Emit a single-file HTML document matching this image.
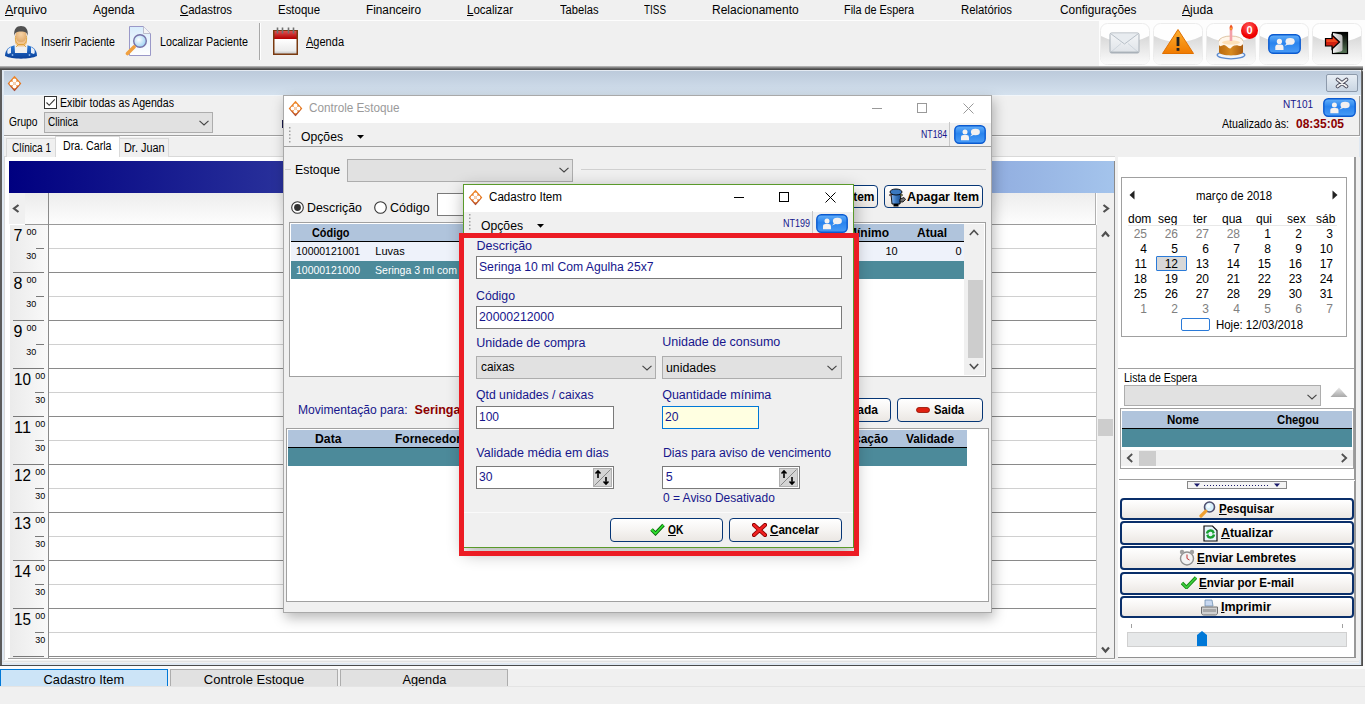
<!DOCTYPE html>
<html><head><meta charset="utf-8"><title>Cadastro Item</title>
<style>
html,body{margin:0;padding:0;}
body{width:1365px;height:704px;overflow:hidden;position:relative;background:#f0f0f0;font-family:"Liberation Sans",sans-serif;}
.r{position:absolute;display:block;}
.t{position:absolute;white-space:nowrap;}
u{text-decoration:underline;text-underline-offset:1px;}
</style></head><body>
<div class="r" style="left:0px;top:0px;width:1365px;height:20px;background:#f0f0f0"></div>
<div class="r" style="left:0px;top:20px;width:1365px;height:1px;background:#fdfdfd"></div>
<div class="t" style="left:5.00px;top:4.34px;font-size:12px;line-height:12px;color:#000;transform:scaleX(1.0323);transform-origin:left 0;"><u>A</u>rquivo</div>
<div class="t" style="left:93.00px;top:4.34px;font-size:12px;line-height:12px;color:#000;">Agenda</div>
<div class="t" style="left:180.00px;top:4.34px;font-size:12px;line-height:12px;color:#000;transform:scaleX(0.9508);transform-origin:left 0;"><u>C</u>adastros</div>
<div class="t" style="left:278.00px;top:4.34px;font-size:12px;line-height:12px;color:#000;transform:scaleX(0.9539);transform-origin:left 0;">Estoque</div>
<div class="t" style="left:366.00px;top:4.34px;font-size:12px;line-height:12px;color:#000;transform:scaleX(0.9817);transform-origin:left 0;">Financeiro</div>
<div class="t" style="left:467.00px;top:4.34px;font-size:12px;line-height:12px;color:#000;transform:scaleX(0.9579);transform-origin:left 0;"><u>L</u>ocalizar</div>
<div class="t" style="left:560.00px;top:4.34px;font-size:12px;line-height:12px;color:#000;transform:scaleX(0.9309);transform-origin:left 0;">Tabelas</div>
<div class="t" style="left:644.00px;top:4.34px;font-size:12px;line-height:12px;color:#000;transform:scaleX(0.8248);transform-origin:left 0;">TISS</div>
<div class="t" style="left:712.00px;top:4.34px;font-size:12px;line-height:12px;color:#000;">Relacionamento</div>
<div class="t" style="left:844.00px;top:4.34px;font-size:12px;line-height:12px;color:#000;transform:scaleX(0.9048);transform-origin:left 0;">Fila de Espera</div>
<div class="t" style="left:961.00px;top:4.34px;font-size:12px;line-height:12px;color:#000;transform:scaleX(0.9441);transform-origin:left 0;">Relatórios</div>
<div class="t" style="left:1059.50px;top:4.34px;font-size:12px;line-height:12px;color:#000;transform:scaleX(0.9887);transform-origin:left 0;">Configurações</div>
<div class="t" style="left:1182.00px;top:4.34px;font-size:12px;line-height:12px;color:#000;transform:scaleX(1.0101);transform-origin:left 0;"><u>A</u>juda</div>
<div class="r" style="left:0px;top:21px;width:1365px;height:45px;background:#f0f0f0"></div>
<svg class="r" style="left:0px;top:23px" width="40" height="37" viewBox="0 0 40 37"><defs><linearGradient id="pg1" x1="0" y1="0" x2="0" y2="1"><stop offset="0" stop-color="#2a7ad8"/><stop offset="1" stop-color="#0a3f98"/></linearGradient>
<radialGradient id="pg2" cx="0.5" cy="0.4" r="0.6"><stop offset="0" stop-color="#f6d3a6"/><stop offset="1" stop-color="#e0a96a"/></radialGradient></defs>
<path d="M5 33 C5 26 10 23 16 22 L26 22 C32 23 37 26 37 33 C30 36.5 12 36.5 5 33Z" fill="url(#pg1)"/>
<path d="M14.5 22 L27.5 22 L27 30 L15 30Z" fill="#efefef"/>
<path d="M8 26 C7 28 7 30 8 31 L11 30 L11 24Z" fill="#e8eef8"/>
<path d="M34 26 C35 28 35 30 34 31 L31 30 L31 24Z" fill="#e8eef8"/>
<circle cx="12.5" cy="32" r="0.9" fill="#8ab4e8"/><circle cx="29.5" cy="32" r="0.9" fill="#8ab4e8"/>
<path d="M15.5 15 L15 20 L17.5 23.5 L24.5 23.5 L27 20 L26.5 15Z" fill="#f2c48e"/>
<path d="M15.5 13 C15 18 16 20 18.5 21.5 L16 24 M26.5 13 C27 18 26 20 23.5 21.5 L26 24 M18.5 21.5 H23.5" fill="none" stroke="#d89a20" stroke-width="0.8"/>
<ellipse cx="21" cy="12.5" rx="5.6" ry="6.6" fill="url(#pg2)"/>
<path d="M14.3 13 C13.5 6 16.5 3 21 3 C25.5 3 28.5 6 27.7 13 C27 9.5 25.5 8.5 21 8.5 C16.5 8.5 15 9.5 14.3 13Z" fill="#505050"/></svg>
<div class="t" style="left:41.00px;top:36.34px;font-size:12px;line-height:12px;color:#000;transform:scaleX(0.8876);transform-origin:left 0;">Inserir Paciente</div>
<svg class="r" style="left:125px;top:25px" width="27" height="32" viewBox="0 0 27 32"><defs><linearGradient id="mg1" x1="0" y1="0" x2="0" y2="1"><stop offset="0" stop-color="#d8ecfc"/><stop offset="1" stop-color="#ffffff"/></linearGradient>
<radialGradient id="mg2" cx="0.4" cy="0.4" r="0.6"><stop offset="0" stop-color="#ffffff"/><stop offset="1" stop-color="#9fd4f4"/></radialGradient></defs>
<path d="M4.5 1.5 L18.5 1.5 L25.5 8.5 L25.5 30.5 L4.5 30.5Z" fill="url(#mg1)" stroke="#9a98c8" stroke-width="1"/>
<path d="M18.5 1.5 L18.5 8.5 L25.5 8.5" fill="#f4f4f4" stroke="#b0b0c0" stroke-width="0.8"/>
<circle cx="15" cy="16" r="6.3" fill="url(#mg2)" stroke="#7872a8" stroke-width="1.4"/>
<path d="M2.5 28.5 L9 22" stroke="#f0a040" stroke-width="3.6" stroke-linecap="round"/></svg>
<div class="t" style="left:160.00px;top:36.34px;font-size:12px;line-height:12px;color:#000;transform:scaleX(0.8975);transform-origin:left 0;">Localizar Paciente</div>
<div class="r" style="left:259px;top:23px;width:1px;height:37px;background:#a8a8a8"></div>
<div class="r" style="left:260px;top:23px;width:1px;height:37px;background:#ffffff"></div>
<svg class="r" style="left:272px;top:27px" width="27" height="29" viewBox="0 0 27 29"><defs><linearGradient id="cg1" x1="0" y1="0" x2="0" y2="1"><stop offset="0" stop-color="#e05050"/><stop offset="1" stop-color="#b00000"/></linearGradient>
<linearGradient id="cg2" x1="0" y1="0" x2="0" y2="1"><stop offset="0" stop-color="#ffffff"/><stop offset="0.8" stop-color="#ececec"/><stop offset="1" stop-color="#c8c8c8"/></linearGradient></defs>
<rect x="1" y="3" width="25" height="25" fill="#7a3a10"/>
<rect x="2.5" y="4" width="22" height="8" fill="url(#cg1)"/>
<rect x="2.5" y="12" width="22" height="14.5" fill="url(#cg2)"/>
<g stroke="#707070" stroke-width="1.6"><path d="M5.5 0.5V6.5M10.5 0.5V6.5M16.5 0.5V6.5M21.5 0.5V6.5"/></g></svg>
<div class="t" style="left:306.00px;top:36.34px;font-size:12px;line-height:12px;color:#000;transform:scaleX(0.9185);transform-origin:left 0;"><u>A</u>genda</div>
<div class="r" style="left:1099px;top:20px;width:266px;height:46px;background:#fdfdfd"></div>
<svg class="r" style="left:1100px;top:23px" width="50" height="42" viewBox="0 0 50 42"><defs><linearGradient id="tbg0" x1="0" y1="0" x2="0" y2="1"><stop offset="0" stop-color="#d8d8d8"/><stop offset="1" stop-color="#fbfbfb"/></linearGradient></defs><rect x="0.5" y="0.5" width="49" height="41" rx="7" fill="#fefefe" stroke="#ececec"/><path d="M1 13 Q25 25 49 13 V35 Q49 41 43 41 H7 Q1 41 1 35Z" fill="url(#tbg0)"/></svg>
<svg class="r" style="left:1153px;top:23px" width="50" height="42" viewBox="0 0 50 42"><defs><linearGradient id="tbg1" x1="0" y1="0" x2="0" y2="1"><stop offset="0" stop-color="#d8d8d8"/><stop offset="1" stop-color="#fbfbfb"/></linearGradient></defs><rect x="0.5" y="0.5" width="49" height="41" rx="7" fill="#fefefe" stroke="#ececec"/><path d="M1 13 Q25 25 49 13 V35 Q49 41 43 41 H7 Q1 41 1 35Z" fill="url(#tbg1)"/></svg>
<svg class="r" style="left:1206px;top:23px" width="50" height="42" viewBox="0 0 50 42"><defs><linearGradient id="tbg2" x1="0" y1="0" x2="0" y2="1"><stop offset="0" stop-color="#d8d8d8"/><stop offset="1" stop-color="#fbfbfb"/></linearGradient></defs><rect x="0.5" y="0.5" width="49" height="41" rx="7" fill="#fefefe" stroke="#ececec"/><path d="M1 13 Q25 25 49 13 V35 Q49 41 43 41 H7 Q1 41 1 35Z" fill="url(#tbg2)"/></svg>
<svg class="r" style="left:1259px;top:23px" width="50" height="42" viewBox="0 0 50 42"><defs><linearGradient id="tbg3" x1="0" y1="0" x2="0" y2="1"><stop offset="0" stop-color="#d8d8d8"/><stop offset="1" stop-color="#fbfbfb"/></linearGradient></defs><rect x="0.5" y="0.5" width="49" height="41" rx="7" fill="#fefefe" stroke="#ececec"/><path d="M1 13 Q25 25 49 13 V35 Q49 41 43 41 H7 Q1 41 1 35Z" fill="url(#tbg3)"/></svg>
<svg class="r" style="left:1312px;top:23px" width="50" height="42" viewBox="0 0 50 42"><defs><linearGradient id="tbg4" x1="0" y1="0" x2="0" y2="1"><stop offset="0" stop-color="#d8d8d8"/><stop offset="1" stop-color="#fbfbfb"/></linearGradient></defs><rect x="0.5" y="0.5" width="49" height="41" rx="7" fill="#fefefe" stroke="#ececec"/><path d="M1 13 Q25 25 49 13 V35 Q49 41 43 41 H7 Q1 41 1 35Z" fill="url(#tbg4)"/></svg>
<svg class="r" style="left:1108px;top:31px" width="33" height="24" viewBox="0 0 33 24"><defs><linearGradient id="env" x1="0" y1="0" x2="0" y2="1"><stop offset="0" stop-color="#f4f6f8"/><stop offset="1" stop-color="#dfe3e8"/></linearGradient></defs>
<rect x="2" y="2" width="29" height="20" rx="1.5" fill="url(#env)" stroke="#a8b0b8" stroke-width="1"/>
<path d="M2.5 2.5 L16.5 13 L30.5 2.5" fill="#e8ecf0" stroke="#b8c0c8" stroke-width="1"/>
<path d="M2.5 21.5 L13 12.5 M30.5 21.5 L20 12.5" stroke="#c8d0d8" stroke-width="0.8"/>
<rect x="2.5" y="20.5" width="28" height="1.5" fill="#98a0a8" opacity="0.6"/></svg>
<svg class="r" style="left:1161px;top:28px" width="34" height="27" viewBox="0 0 34 27"><defs><linearGradient id="wrn" x1="0" y1="0" x2="0" y2="1"><stop offset="0" stop-color="#ffb030"/><stop offset="1" stop-color="#f07a00"/></linearGradient></defs>
<path d="M17 1.5 L32.5 25.5 L1.5 25.5Z" fill="url(#wrn)" stroke="#e07000" stroke-linejoin="round"/><rect x="15.6" y="9" width="2.8" height="9" fill="#222"/><rect x="15.6" y="20" width="2.8" height="2.8" fill="#222"/></svg>
<svg class="r" style="left:1214px;top:24px" width="38" height="36" viewBox="0 0 38 36"><defs><linearGradient id="ck" x1="0" y1="0" x2="1" y2="0"><stop offset="0" stop-color="#b86a10"/><stop offset="0.5" stop-color="#d88a20"/><stop offset="1" stop-color="#a85a10"/></linearGradient></defs>
<ellipse cx="17" cy="31" rx="13.8" ry="3.8" fill="#eef4fc" stroke="#5a8ad0" stroke-width="1.3"/>
<path d="M5 17 L5 28 C5 32.5 29 32.5 29 28 L29 17Z" fill="url(#ck)"/>
<ellipse cx="17" cy="17" rx="12" ry="5" fill="#fff6ea" stroke="#c8a070" stroke-width="0.6"/>
<path d="M5 17 L5 21 C7 24 9 20 11 21 C13 22 15 26 17 24 C19 22 21 20 23 21 C25 22 27 23 29 20 L29 17Z" fill="#fff6ea"/>
<ellipse cx="17" cy="18.5" rx="9" ry="2.2" fill="#fde0b8"/>
<rect x="15.7" y="5" width="2.6" height="12" fill="#f4a0a8"/>
<path d="M17 0.5 C19.5 3 19 5.5 17 6.5 C15 5.5 15 3 17 0.5Z" fill="#f05020"/><path d="M17 3 C18 4.5 17.8 5.5 17 6 C16.2 5.5 16.2 4.5 17 3Z" fill="#ffd040"/></svg>
<div class="r" style="left:1241px;top:22px;width:17px;height:17px;border-radius:50%;background:radial-gradient(circle at 45% 30%,#ff6060,#f00000 60%,#e00000);color:#fff;font-size:11px;font-weight:bold;line-height:17px;text-align:center">0</div>
<svg class="r" style="left:1268px;top:34px" width="33" height="20" viewBox="0 0 33 20"><defs><linearGradient id="chg1268" x1="0" y1="0" x2="0" y2="1"><stop offset="0" stop-color="#64b0fa"/><stop offset="0.45" stop-color="#2a84ee"/><stop offset="1" stop-color="#4a9cf6"/></linearGradient></defs>
<rect x="0.8" y="0.8" width="31.4" height="18.4" rx="4.5" fill="url(#chg1268)" stroke="#0a5ad0" stroke-width="1.4"/>
<circle cx="11.4" cy="7.4" r="2.6" fill="#f6f2f0"/>
<path d="M7.3 16.0 V13.2 Q7.3 10.6 9.9 10.6 H12.9 Q15.5 10.6 15.5 13.2 V16.0Z" fill="#f6f2f0"/>
<ellipse cx="22.1" cy="7.4" rx="4.6" ry="3.4" fill="#f2f0f0"/>
<path d="M19.1 9.0 L16.5 12.0 L20.8 10.2Z" fill="#f2f0f0"/></svg>
<svg class="r" style="left:1322px;top:30px" width="28" height="26" viewBox="0 0 28 26"><defs><linearGradient id="exg" x1="0" y1="0" x2="0" y2="1"><stop offset="0" stop-color="#000"/><stop offset="1" stop-color="#5a7a5a"/></linearGradient><linearGradient id="exd" x1="0" y1="0" x2="1" y2="0"><stop offset="0" stop-color="#f0f0f0"/><stop offset="1" stop-color="#b8b8b8"/></linearGradient></defs>
<rect x="10.5" y="2.5" width="15" height="21" fill="url(#exg)" stroke="#000" stroke-width="1.2"/>
<path d="M11 3 L19 4.5 Q20.5 5 20.5 7 V19.5 Q20.5 21 19 21.5 L11 23Z" fill="url(#exd)"/>
<path d="M3.5 8.5 H10 V5 L17.5 12 L10 19 V16 H3.5Z" fill="#d02010" stroke="#000" stroke-width="1.2" stroke-linejoin="miter"/>
<path d="M4.5 9.5 H11 V7.5 L15.5 12 H4.5Z" fill="#f04a20"/></svg>
<div class="r" style="left:0px;top:66px;width:1365px;height:4px;background:linear-gradient(#c4c4c4,#6a6a6a 55%,#3c3c3c)"></div>
<div class="r" style="left:0px;top:70px;width:1365px;height:596px;background:#f0f0f0"></div>
<div class="r" style="left:0px;top:70px;width:2px;height:596px;background:#5c5c5c"></div>
<div class="r" style="left:1361px;top:70px;width:2px;height:596px;background:linear-gradient(90deg,#7a7a7a,#404040);border-radius:0 5px 0 0"></div>
<div class="r" style="left:1363px;top:66px;width:2px;height:603px;background:#fbfbfb"></div>
<div class="r" style="left:0px;top:665px;width:1363px;height:1px;background:#4a4a4a"></div>
<div class="r" style="left:2px;top:70px;width:1359px;height:25px;background:linear-gradient(#e4eaf2 0px,#e4eaf2 1px,#bccadb 1px,#d4e1ee);border-radius:4px 4px 0 0"></div>
<div class="r" style="left:2px;top:95px;width:1359px;height:1px;background:#f2f6fa"></div>
<div class="r" style="left:2px;top:70px;width:2px;height:593px;background:#dfe8f2"></div>
<div class="r" style="left:1359px;top:96px;width:2px;height:569px;background:#dfe8f2"></div>
<div class="r" style="left:2px;top:663px;width:1359px;height:2px;background:#dfe8f2"></div>
<div class="r" style="left:2px;top:661px;width:1357px;height:1px;background:#e2e2e2"></div>
<svg class="r" style="left:6.5px;top:74.5px" width="15" height="17" viewBox="0 0 14 16"><defs><linearGradient id="dmg" x1="0" y1="0" x2="0" y2="1"><stop offset="0" stop-color="#f08a2a"/><stop offset="1" stop-color="#d86010"/></linearGradient></defs>
<path d="M7 0.6 L13.4 8 L7 15.4 L0.6 8Z" fill="url(#dmg)"/>
<path d="M7 14.2 L1.2 8.6 L0.6 8 L7 15.4 L13.4 8 L12.8 8.6Z" fill="#7a3a6a" opacity="0.6"/>
<circle cx="7" cy="5.3" r="1.9" fill="#fff"/><circle cx="7" cy="10.7" r="1.9" fill="#fff"/><circle cx="4.3" cy="8" r="1.9" fill="#fff"/><circle cx="9.7" cy="8" r="1.9" fill="#fff"/>
<circle cx="7" cy="8" r="0.9" fill="#f8d0b0"/></svg>
<div class="r" style="left:1326px;top:74px;width:32px;height:18px;border:1px solid #8d9aab;border-radius:2px;background:linear-gradient(#e8eef5,#c9d5e2);box-sizing:border-box"></div>
<svg class="r" style="left:1335px;top:77px" width="14" height="12" viewBox="0 0 14 12"><path d="M2.5 2.5 L11.5 9.5 M11.5 2.5 L2.5 9.5" stroke="#4a4a5a" stroke-width="3.6" stroke-linecap="round"/><path d="M2.5 2.5 L11.5 9.5 M11.5 2.5 L2.5 9.5" stroke="#f4f4f4" stroke-width="1.8" stroke-linecap="round"/></svg>
<div class="r" style="left:44px;top:96px;width:13px;height:13px;border:1px solid #333;background:#fff;box-sizing:border-box"></div>
<svg class="r" style="left:44px;top:96px" width="13" height="13" viewBox="0 0 13 13"><path d="M2.5 6.5 L5.2 9.3 L10.8 3.3" fill="none" stroke="#333" stroke-width="1.1"/></svg>
<div class="t" style="left:59.50px;top:96.94px;font-size:12px;line-height:12px;color:#000;transform:scaleX(0.8855);transform-origin:left 0;">Exibir todas as Agendas</div>
<div class="t" style="left:8.70px;top:116.34px;font-size:12px;line-height:12px;color:#000;transform:scaleX(0.8546);transform-origin:left 0;">Grupo</div>
<div class="r" style="left:44px;top:112px;width:169px;height:21px;background:#e1e1e1;border:1px solid #adadad;box-sizing:border-box"></div>
<div class="t" style="left:47.60px;top:116.34px;font-size:12px;line-height:12px;color:#000;transform:scaleX(0.8331);transform-origin:left 0;">Clinica</div>
<svg class="r" style="left:199px;top:120px" width="10" height="6" viewBox="0 0 10 6"><path d="M0.5 0.8 L5 5 L9.5 0.8" fill="none" stroke="#444" stroke-width="1.1"/></svg>
<div class="r" style="left:4px;top:135px;width:1356px;height:1px;background:#a0a0a0"></div>
<div class="r" style="left:4px;top:136px;width:1356px;height:1px;background:#fbfbfb"></div>
<div class="r" style="left:4px;top:156px;width:1111px;height:1px;background:#d9d9d9"></div>
<div class="r" style="left:4px;top:157px;width:1111px;height:503px;background:#fff"></div>
<div class="r" style="left:4px;top:157px;width:1px;height:503px;background:#d9d9d9"></div>
<div class="r" style="left:6px;top:138px;width:50px;height:19px;background:#f0f0f0;border:1px solid #d9d9d9;border-bottom:none;box-sizing:border-box"></div>
<div class="r" style="left:119px;top:138px;width:50px;height:19px;background:#f0f0f0;border:1px solid #d9d9d9;border-bottom:none;box-sizing:border-box"></div>
<div class="r" style="left:55px;top:136px;width:65px;height:21px;background:#fff;border:1px solid #d9d9d9;border-bottom:none;box-sizing:border-box"></div>
<div class="t" style="left:11.60px;top:142.04px;font-size:12px;line-height:12px;color:#000;transform:scaleX(0.8354);transform-origin:left 0;">Clínica 1</div>
<div class="t" style="left:62.60px;top:139.84px;font-size:12px;line-height:12px;color:#000;transform:scaleX(0.8870);transform-origin:left 0;">Dra. Carla</div>
<div class="t" style="left:123.60px;top:142.04px;font-size:12px;line-height:12px;color:#000;transform:scaleX(0.9085);transform-origin:left 0;">Dr. Juan</div>
<div class="r" style="left:9px;top:161px;width:1106px;height:32px;background:linear-gradient(90deg,#000080,#a4c4ec)"></div>
<div class="r" style="left:9px;top:193px;width:16px;height:31px;background:#f0f0f0"></div>
<svg class="r" style="left:12px;top:204px" width="8" height="9" viewBox="0 0 8 9"><path d="M6.5 1 L2 4.5 L6.5 8" fill="none" stroke="#505050" stroke-width="2.2"/></svg>
<div class="r" style="left:25px;top:193px;width:23px;height:31px;background:linear-gradient(#ebebeb,#fbfbfb)"></div>
<div class="r" style="left:25px;top:224px;width:24px;height:1px;background:#999"></div>
<div class="r" style="left:49px;top:193px;width:1047px;height:31px;background:linear-gradient(#ededed,#fdfdfd)"></div>
<div class="r" style="left:48px;top:193px;width:1px;height:465px;background:#8a8a8a"></div>
<div class="r" style="left:49px;top:224px;width:1047px;height:1px;background:#9a9a9a"></div>
<div class="r" style="left:1095px;top:193px;width:1px;height:31px;background:#b0b0b0"></div>
<div class="r" style="left:1097px;top:193px;width:1px;height:32px;background:#9a9a9a"></div>
<div class="r" style="left:1096px;top:225px;width:1px;height:433px;background:#c8c8c8"></div>
<div class="r" style="left:1097px;top:193px;width:17px;height:465px;background:#f0f0f0"></div>
<svg class="r" style="left:1102px;top:204px" width="8" height="9" viewBox="0 0 8 9"><path d="M1.5 1 L6 4.5 L1.5 8" fill="none" stroke="#505050" stroke-width="2.2"/></svg>
<svg class="r" style="left:1101px;top:230px" width="9" height="8" viewBox="0 0 9 8"><path d="M1 6.5 L4.5 2.5 L8 6.5" fill="none" stroke="#505050" stroke-width="2.2"/></svg>
<div class="r" style="left:1098px;top:419px;width:15px;height:17px;background:#cdcdcd"></div>
<svg class="r" style="left:1101px;top:646px" width="9" height="8" viewBox="0 0 9 8"><path d="M1 1.5 L4.5 5.5 L8 1.5" fill="none" stroke="#505050" stroke-width="2.2"/></svg>
<div class="r" style="left:1114px;top:161px;width:1px;height:497px;background:#8a8a8a"></div>
<div class="r" style="left:10px;top:225px;width:38px;height:433px;background:linear-gradient(90deg,#ebebeb,#f9f9f9)"></div>
<div class="r" style="left:49px;top:248px;width:1047px;height:1px;background:#d0d0d0"></div>
<div class="t" style="left:13.50px;top:227.96px;font-size:16px;line-height:16px;color:#000;">7</div>
<div class="t" style="left:26.40px;top:227.88px;font-size:9px;line-height:9px;color:#000;">00</div>
<div class="t" style="left:26.20px;top:251.88px;font-size:9px;line-height:9px;color:#000;">30</div>
<div class="r" style="left:36px;top:248px;width:8px;height:1px;background:#7a7a7a"></div>
<div class="r" style="left:49px;top:272px;width:1047px;height:1px;background:#8a8a8a"></div>
<div class="r" style="left:13px;top:272px;width:31px;height:1px;background:#7a7a7a"></div>
<div class="r" style="left:49px;top:296px;width:1047px;height:1px;background:#d0d0d0"></div>
<div class="t" style="left:13.50px;top:275.96px;font-size:16px;line-height:16px;color:#000;">8</div>
<div class="t" style="left:26.40px;top:275.88px;font-size:9px;line-height:9px;color:#000;">00</div>
<div class="t" style="left:26.20px;top:299.88px;font-size:9px;line-height:9px;color:#000;">30</div>
<div class="r" style="left:36px;top:296px;width:8px;height:1px;background:#7a7a7a"></div>
<div class="r" style="left:49px;top:320px;width:1047px;height:1px;background:#8a8a8a"></div>
<div class="r" style="left:13px;top:320px;width:31px;height:1px;background:#7a7a7a"></div>
<div class="r" style="left:49px;top:344px;width:1047px;height:1px;background:#d0d0d0"></div>
<div class="t" style="left:13.50px;top:323.96px;font-size:16px;line-height:16px;color:#000;">9</div>
<div class="t" style="left:26.40px;top:323.88px;font-size:9px;line-height:9px;color:#000;">00</div>
<div class="t" style="left:26.20px;top:347.88px;font-size:9px;line-height:9px;color:#000;">30</div>
<div class="r" style="left:36px;top:344px;width:8px;height:1px;background:#7a7a7a"></div>
<div class="r" style="left:49px;top:368px;width:1047px;height:1px;background:#8a8a8a"></div>
<div class="r" style="left:13px;top:368px;width:31px;height:1px;background:#7a7a7a"></div>
<div class="r" style="left:49px;top:392px;width:1047px;height:1px;background:#d0d0d0"></div>
<div class="t" style="left:14.00px;top:371.96px;font-size:16px;line-height:16px;color:#000;transform:scaleX(0.9553);transform-origin:left 0;">10</div>
<div class="t" style="left:35.30px;top:371.88px;font-size:9px;line-height:9px;color:#000;">00</div>
<div class="t" style="left:35.30px;top:395.88px;font-size:9px;line-height:9px;color:#000;">30</div>
<div class="r" style="left:35px;top:392px;width:9px;height:1px;background:#7a7a7a"></div>
<div class="r" style="left:49px;top:416px;width:1047px;height:1px;background:#8a8a8a"></div>
<div class="r" style="left:13px;top:416px;width:31px;height:1px;background:#7a7a7a"></div>
<div class="r" style="left:49px;top:440px;width:1047px;height:1px;background:#d0d0d0"></div>
<div class="t" style="left:14.00px;top:419.96px;font-size:16px;line-height:16px;color:#000;transform:scaleX(1.0236);transform-origin:left 0;">11</div>
<div class="t" style="left:35.30px;top:419.88px;font-size:9px;line-height:9px;color:#000;">00</div>
<div class="t" style="left:35.30px;top:443.88px;font-size:9px;line-height:9px;color:#000;">30</div>
<div class="r" style="left:35px;top:440px;width:9px;height:1px;background:#7a7a7a"></div>
<div class="r" style="left:49px;top:464px;width:1047px;height:1px;background:#8a8a8a"></div>
<div class="r" style="left:13px;top:464px;width:31px;height:1px;background:#7a7a7a"></div>
<div class="r" style="left:49px;top:488px;width:1047px;height:1px;background:#d0d0d0"></div>
<div class="t" style="left:14.00px;top:467.96px;font-size:16px;line-height:16px;color:#000;transform:scaleX(0.9553);transform-origin:left 0;">12</div>
<div class="t" style="left:35.30px;top:467.88px;font-size:9px;line-height:9px;color:#000;">00</div>
<div class="t" style="left:35.30px;top:491.88px;font-size:9px;line-height:9px;color:#000;">30</div>
<div class="r" style="left:35px;top:488px;width:9px;height:1px;background:#7a7a7a"></div>
<div class="r" style="left:49px;top:512px;width:1047px;height:1px;background:#8a8a8a"></div>
<div class="r" style="left:13px;top:512px;width:31px;height:1px;background:#7a7a7a"></div>
<div class="r" style="left:49px;top:536px;width:1047px;height:1px;background:#d0d0d0"></div>
<div class="t" style="left:14.00px;top:515.96px;font-size:16px;line-height:16px;color:#000;transform:scaleX(0.9553);transform-origin:left 0;">13</div>
<div class="t" style="left:35.30px;top:515.88px;font-size:9px;line-height:9px;color:#000;">00</div>
<div class="t" style="left:35.30px;top:539.88px;font-size:9px;line-height:9px;color:#000;">30</div>
<div class="r" style="left:35px;top:536px;width:9px;height:1px;background:#7a7a7a"></div>
<div class="r" style="left:49px;top:560px;width:1047px;height:1px;background:#8a8a8a"></div>
<div class="r" style="left:13px;top:560px;width:31px;height:1px;background:#7a7a7a"></div>
<div class="r" style="left:49px;top:584px;width:1047px;height:1px;background:#d0d0d0"></div>
<div class="t" style="left:14.00px;top:563.96px;font-size:16px;line-height:16px;color:#000;transform:scaleX(0.9553);transform-origin:left 0;">14</div>
<div class="t" style="left:35.30px;top:563.88px;font-size:9px;line-height:9px;color:#000;">00</div>
<div class="t" style="left:35.30px;top:587.88px;font-size:9px;line-height:9px;color:#000;">30</div>
<div class="r" style="left:35px;top:584px;width:9px;height:1px;background:#7a7a7a"></div>
<div class="r" style="left:49px;top:608px;width:1047px;height:1px;background:#8a8a8a"></div>
<div class="r" style="left:13px;top:608px;width:31px;height:1px;background:#7a7a7a"></div>
<div class="r" style="left:49px;top:632px;width:1047px;height:1px;background:#d0d0d0"></div>
<div class="t" style="left:14.00px;top:611.96px;font-size:16px;line-height:16px;color:#000;transform:scaleX(0.9553);transform-origin:left 0;">15</div>
<div class="t" style="left:35.30px;top:611.88px;font-size:9px;line-height:9px;color:#000;">00</div>
<div class="t" style="left:35.30px;top:635.88px;font-size:9px;line-height:9px;color:#000;">30</div>
<div class="r" style="left:35px;top:632px;width:9px;height:1px;background:#7a7a7a"></div>
<div class="r" style="left:49px;top:656px;width:1047px;height:1px;background:#8a8a8a"></div>
<div class="r" style="left:13px;top:656px;width:31px;height:1px;background:#7a7a7a"></div>
<div class="r" style="left:8px;top:658px;width:1107px;height:1px;background:#a0a0a0"></div>
<div class="t" style="left:1283.00px;top:100.03px;font-size:10px;line-height:10px;color:#16168c;">NT101</div>
<svg class="r" style="left:1323px;top:98px" width="33" height="19" viewBox="0 0 33 19"><defs><linearGradient id="chg1323" x1="0" y1="0" x2="0" y2="1"><stop offset="0" stop-color="#64b0fa"/><stop offset="0.45" stop-color="#2a84ee"/><stop offset="1" stop-color="#4a9cf6"/></linearGradient></defs>
<rect x="0.8" y="0.8" width="31.4" height="17.4" rx="4.5" fill="url(#chg1323)" stroke="#0a5ad0" stroke-width="1.4"/>
<circle cx="11.4" cy="7.0" r="2.5" fill="#f6f2f0"/>
<path d="M7.3 15.2 V12.5 Q7.3 10.1 9.9 10.1 H12.9 Q15.5 10.1 15.5 12.5 V15.2Z" fill="#f6f2f0"/>
<ellipse cx="22.1" cy="7.0" rx="4.6" ry="3.2" fill="#f2f0f0"/>
<path d="M19.1 8.6 L16.5 11.4 L20.8 9.7Z" fill="#f2f0f0"/></svg>
<div class="t" style="left:1221.70px;top:118.14px;font-size:12px;line-height:12px;color:#000;transform:scaleX(0.8889);transform-origin:left 0;">Atualizado às:</div>
<div class="t" style="left:1296.00px;top:118.14px;font-size:12px;line-height:12px;color:#8b0000;font-weight:bold;">08:35:05</div>
<div class="r" style="left:1359px;top:96px;width:1px;height:40px;background:#a0a0a0"></div>
<div class="r" style="left:1115px;top:157px;width:245px;height:503px;background:#f0f0f0"></div>
<div class="r" style="left:1118px;top:157px;width:236px;height:501px;background:#fff"></div>
<div class="r" style="left:1354px;top:157px;width:2px;height:501px;background:#999"></div>
<div class="r" style="left:1118px;top:368px;width:236px;height:1px;background:#a0a0a0"></div>
<div class="r" style="left:1118px;top:657px;width:238px;height:1px;background:#909090"></div>
<div class="r" style="left:1121px;top:177px;width:226px;height:160px;border:1px solid #a0a0a0;background:#fff;box-sizing:border-box"></div>
<svg class="r" style="left:1129px;top:190px" width="6" height="10" viewBox="0 0 6 10"><path d="M5.5 0.5 L0.5 5 L5.5 9.5Z" fill="#222"/></svg>
<svg class="r" style="left:1332px;top:190px" width="6" height="10" viewBox="0 0 6 10"><path d="M0.5 0.5 L5.5 5 L0.5 9.5Z" fill="#222"/></svg>
<div class="t" style="left:1193.98px;top:190.04px;font-size:12px;line-height:12px;color:#000;transform:scaleX(0.9495);transform-origin:center 0;">março de 2018</div>
<div class="t" style="left:1128.00px;top:212.54px;font-size:12px;line-height:12px;color:#000;">dom</div>
<div class="t" style="left:1158.00px;top:212.54px;font-size:12px;line-height:12px;color:#000;">seg</div>
<div class="t" style="left:1193.00px;top:212.54px;font-size:12px;line-height:12px;color:#000;">ter</div>
<div class="t" style="left:1222.00px;top:212.54px;font-size:12px;line-height:12px;color:#000;">qua</div>
<div class="t" style="left:1256.00px;top:212.54px;font-size:12px;line-height:12px;color:#000;">qui</div>
<div class="t" style="left:1287.00px;top:212.54px;font-size:12px;line-height:12px;color:#000;">sex</div>
<div class="t" style="left:1316.00px;top:212.54px;font-size:12px;line-height:12px;color:#000;">sáb</div>
<div class="r" style="left:1128px;top:225px;width:209px;height:1px;background:#e8e8e8"></div>
<div class="r" style="left:1156px;top:256px;width:31px;height:15px;background:#d8d8d8;border:1px solid #2a7ad8;box-sizing:border-box;border-radius:1px"></div>
<div class="t" style="right:218.00px;top:228.34px;font-size:12px;line-height:12px;color:#808080;">25</div>
<div class="t" style="right:187.00px;top:228.34px;font-size:12px;line-height:12px;color:#808080;">26</div>
<div class="t" style="right:156.00px;top:228.34px;font-size:12px;line-height:12px;color:#808080;">27</div>
<div class="t" style="right:125.00px;top:228.34px;font-size:12px;line-height:12px;color:#808080;">28</div>
<div class="t" style="right:94.00px;top:228.34px;font-size:12px;line-height:12px;color:#000;">1</div>
<div class="t" style="right:63.00px;top:228.34px;font-size:12px;line-height:12px;color:#000;">2</div>
<div class="t" style="right:32.00px;top:228.34px;font-size:12px;line-height:12px;color:#000;">3</div>
<div class="t" style="right:218.00px;top:243.34px;font-size:12px;line-height:12px;color:#000;">4</div>
<div class="t" style="right:187.00px;top:243.34px;font-size:12px;line-height:12px;color:#000;">5</div>
<div class="t" style="right:156.00px;top:243.34px;font-size:12px;line-height:12px;color:#000;">6</div>
<div class="t" style="right:125.00px;top:243.34px;font-size:12px;line-height:12px;color:#000;">7</div>
<div class="t" style="right:94.00px;top:243.34px;font-size:12px;line-height:12px;color:#000;">8</div>
<div class="t" style="right:63.00px;top:243.34px;font-size:12px;line-height:12px;color:#000;">9</div>
<div class="t" style="right:32.00px;top:243.34px;font-size:12px;line-height:12px;color:#000;">10</div>
<div class="t" style="right:218.00px;top:258.34px;font-size:12px;line-height:12px;color:#000;">11</div>
<div class="t" style="right:187.00px;top:258.34px;font-size:12px;line-height:12px;color:#000;">12</div>
<div class="t" style="right:156.00px;top:258.34px;font-size:12px;line-height:12px;color:#000;">13</div>
<div class="t" style="right:125.00px;top:258.34px;font-size:12px;line-height:12px;color:#000;">14</div>
<div class="t" style="right:94.00px;top:258.34px;font-size:12px;line-height:12px;color:#000;">15</div>
<div class="t" style="right:63.00px;top:258.34px;font-size:12px;line-height:12px;color:#000;">16</div>
<div class="t" style="right:32.00px;top:258.34px;font-size:12px;line-height:12px;color:#000;">17</div>
<div class="t" style="right:218.00px;top:273.34px;font-size:12px;line-height:12px;color:#000;">18</div>
<div class="t" style="right:187.00px;top:273.34px;font-size:12px;line-height:12px;color:#000;">19</div>
<div class="t" style="right:156.00px;top:273.34px;font-size:12px;line-height:12px;color:#000;">20</div>
<div class="t" style="right:125.00px;top:273.34px;font-size:12px;line-height:12px;color:#000;">21</div>
<div class="t" style="right:94.00px;top:273.34px;font-size:12px;line-height:12px;color:#000;">22</div>
<div class="t" style="right:63.00px;top:273.34px;font-size:12px;line-height:12px;color:#000;">23</div>
<div class="t" style="right:32.00px;top:273.34px;font-size:12px;line-height:12px;color:#000;">24</div>
<div class="t" style="right:218.00px;top:288.34px;font-size:12px;line-height:12px;color:#000;">25</div>
<div class="t" style="right:187.00px;top:288.34px;font-size:12px;line-height:12px;color:#000;">26</div>
<div class="t" style="right:156.00px;top:288.34px;font-size:12px;line-height:12px;color:#000;">27</div>
<div class="t" style="right:125.00px;top:288.34px;font-size:12px;line-height:12px;color:#000;">28</div>
<div class="t" style="right:94.00px;top:288.34px;font-size:12px;line-height:12px;color:#000;">29</div>
<div class="t" style="right:63.00px;top:288.34px;font-size:12px;line-height:12px;color:#000;">30</div>
<div class="t" style="right:32.00px;top:288.34px;font-size:12px;line-height:12px;color:#000;">31</div>
<div class="t" style="right:218.00px;top:303.34px;font-size:12px;line-height:12px;color:#808080;">1</div>
<div class="t" style="right:187.00px;top:303.34px;font-size:12px;line-height:12px;color:#808080;">2</div>
<div class="t" style="right:156.00px;top:303.34px;font-size:12px;line-height:12px;color:#808080;">3</div>
<div class="t" style="right:125.00px;top:303.34px;font-size:12px;line-height:12px;color:#808080;">4</div>
<div class="t" style="right:94.00px;top:303.34px;font-size:12px;line-height:12px;color:#808080;">5</div>
<div class="t" style="right:63.00px;top:303.34px;font-size:12px;line-height:12px;color:#808080;">6</div>
<div class="t" style="right:32.00px;top:303.34px;font-size:12px;line-height:12px;color:#808080;">7</div>
<div class="r" style="left:1181px;top:318px;width:29px;height:13px;border:1px solid #2a7ad8;box-sizing:border-box;border-radius:2px"></div>
<div class="t" style="left:1215.50px;top:318.94px;font-size:12px;line-height:12px;color:#000;transform:scaleX(0.9519);transform-origin:left 0;">Hoje: 12/03/2018</div>
<div class="t" style="left:1123.50px;top:371.94px;font-size:12px;line-height:12px;color:#000;transform:scaleX(0.8755);transform-origin:left 0;">Lista de Espera</div>
<div class="r" style="left:1124px;top:385px;width:197px;height:21px;background:#e1e1e1;border:1px solid #adadad;box-sizing:border-box"></div>
<svg class="r" style="left:1307px;top:394px" width="10" height="6" viewBox="0 0 10 6"><path d="M0.5 0.8 L5 5 L9.5 0.8" fill="none" stroke="#444" stroke-width="1.1"/></svg>
<svg class="r" style="left:1330px;top:387px" width="18" height="11" viewBox="0 0 18 11"><defs><linearGradient id="tri" x1="0" y1="0" x2="0" y2="1"><stop offset="0" stop-color="#e8e8e8"/><stop offset="1" stop-color="#a8a8a8"/></linearGradient></defs><path d="M9 0.5 L17.5 10 L0.5 10Z" fill="url(#tri)"/></svg>
<div class="r" style="left:1120px;top:408px;width:234px;height:61px;border:1px solid #a0a0a0;background:#fff;box-sizing:border-box"></div>
<div class="r" style="left:1122px;top:411px;width:230px;height:17px;background:#b0c4dc"></div>
<div class="r" style="left:1122px;top:428px;width:230px;height:1px;background:#000"></div>
<div class="r" style="left:1122px;top:429px;width:230px;height:18px;background:#4c8a9a"></div>
<div class="t" style="left:1167.00px;top:414.34px;font-size:12px;line-height:12px;color:#000;font-weight:bold;transform:scaleX(0.9598);transform-origin:left 0;">Nome</div>
<div class="t" style="left:1277.00px;top:414.34px;font-size:12px;line-height:12px;color:#000;font-weight:bold;transform:scaleX(0.9405);transform-origin:left 0;">Chegou</div>
<div class="r" style="left:1121px;top:450px;width:232px;height:16px;background:#f0f0f0"></div>
<svg class="r" style="left:1126px;top:453px" width="8" height="10" viewBox="0 0 8 10"><path d="M6.2 1 L1.8 5 L6.2 9" fill="none" stroke="#505050" stroke-width="1.8"/></svg>
<div class="r" style="left:1139px;top:451px;width:17px;height:15px;background:#cdcdcd"></div>
<svg class="r" style="left:1340px;top:453px" width="8" height="10" viewBox="0 0 8 10"><path d="M1.8 1 L6.2 5 L1.8 9" fill="none" stroke="#505050" stroke-width="1.8"/></svg>
<div class="r" style="left:1119px;top:479px;width:236px;height:1px;background:#a0a0a0"></div>
<div class="r" style="left:1119px;top:480px;width:236px;height:1px;background:#fff"></div>
<div class="r" style="left:1187px;top:481px;width:100px;height:8px;border:1px solid #888;background:#f4f4f4;box-sizing:border-box"></div>
<svg class="r" style="left:1194px;top:483px" width="86" height="5" viewBox="0 0 86 5"><path d="M0 0.5 H6 L3 4Z M80 0.5 H86 L83 4Z" fill="#1a1a6a"/><path d="M10 2.5 H76" stroke="#1a1a6a" stroke-dasharray="1 2"/></svg>
<div class="r" style="left:1120px;top:498px;width:234px;height:22px;border:2px solid #0a2f6a;border-radius:4px;background:linear-gradient(#ffffff,#f6f4f2 50%,#ebe7e3);box-sizing:border-box"></div>
<div class="r" style="left:1120px;top:521px;width:234px;height:24px;border:2px solid #0a2f6a;border-radius:4px;background:linear-gradient(#ffffff,#f6f4f2 50%,#ebe7e3);box-sizing:border-box"></div>
<div class="r" style="left:1120px;top:546px;width:234px;height:24px;border:2px solid #0a2f6a;border-radius:4px;background:linear-gradient(#ffffff,#f6f4f2 50%,#ebe7e3);box-sizing:border-box"></div>
<div class="r" style="left:1120px;top:572px;width:234px;height:23px;border:2px solid #0a2f6a;border-radius:4px;background:linear-gradient(#ffffff,#f6f4f2 50%,#ebe7e3);box-sizing:border-box"></div>
<div class="r" style="left:1120px;top:596px;width:234px;height:22px;border:2px solid #0a2f6a;border-radius:4px;background:linear-gradient(#ffffff,#f6f4f2 50%,#ebe7e3);box-sizing:border-box"></div>
<div class="t" style="left:1218.80px;top:503.14px;font-size:12px;line-height:12px;color:#000;font-weight:bold;transform:scaleX(0.9589);transform-origin:left 0;"><u>P</u>esquisar</div>
<div class="t" style="left:1221.00px;top:527.34px;font-size:12px;line-height:12px;color:#000;font-weight:bold;transform:scaleX(1.0261);transform-origin:left 0;"><u>A</u>tualizar</div>
<div class="t" style="left:1197.00px;top:552.34px;font-size:12px;line-height:12px;color:#000;font-weight:bold;transform:scaleX(0.9831);transform-origin:left 0;"><u>E</u>nviar Lembretes</div>
<div class="t" style="left:1199.00px;top:577.34px;font-size:12px;line-height:12px;color:#000;font-weight:bold;transform:scaleX(0.9626);transform-origin:left 0;"><u>E</u>nviar por E-mail</div>
<div class="t" style="left:1221.00px;top:601.34px;font-size:12px;line-height:12px;color:#000;font-weight:bold;transform:scaleX(1.0414);transform-origin:left 0;"><u>I</u>mprimir</div>
<svg class="r" style="left:1199px;top:500px" width="18" height="18" viewBox="0 0 18 18"><circle cx="10.5" cy="7" r="5" fill="#d8f0fc" stroke="#505070" stroke-width="1.6"/><circle cx="9.5" cy="6" r="2" fill="#fff" opacity="0.8"/><path d="M2 16 L6.8 11.2" stroke="#f0a030" stroke-width="3.2" stroke-linecap="round"/></svg>
<svg class="r" style="left:1203px;top:525px" width="15" height="17" viewBox="0 0 15 17"><path d="M1 1 H9.5 L14 5.5 V16 H1Z" fill="#e8f4fc" stroke="#111" stroke-width="1.2"/><path d="M4 8.5 A3.6 3.6 0 0 1 10.5 7 M11 9.5 A3.6 3.6 0 0 1 4.5 11" fill="none" stroke="#18a030" stroke-width="2.4"/><path d="M9 5 L12 7.5 L9.5 9Z M6 13 L3 10.5 L5.5 9Z" fill="#18a030"/></svg>
<svg class="r" style="left:1179px;top:549px" width="16" height="17" viewBox="0 0 16 17"><circle cx="8" cy="9.5" r="6.5" fill="#f4f4f4" stroke="#909090" stroke-width="1.4"/><circle cx="3" cy="3" r="2.2" fill="#a0a0a0"/><circle cx="13" cy="3" r="2.2" fill="#a0a0a0"/><path d="M8 5.5 V9.5 L10.5 11" stroke="#c03030" fill="none"/></svg>
<svg class="r" style="left:1181px;top:576px" width="16" height="13" viewBox="0 0 16 13"><path d="M1 7 L5.5 11.5 L15 1.5" fill="none" stroke="#148a14" stroke-width="3.4"/><path d="M1 7 L5.5 11.5 L15 1.5" fill="none" stroke="#40d040" stroke-width="1.6"/></svg>
<svg class="r" style="left:1200px;top:599px" width="19" height="17" viewBox="0 0 19 17"><path d="M5 1 H12 L13 7 H5Z" fill="#c8d8f0" stroke="#7090b0" stroke-width="0.8"/><path d="M1.5 8 H17.5 V14 C17.5 15 16.5 16 15.5 16 H3.5 C2.5 16 1.5 15 1.5 14Z" fill="#d0d0d0" stroke="#707070"/><rect x="3" y="10" width="13" height="3" fill="#a8a8a8"/></svg>
<div class="r" style="left:1131px;top:624px;width:1px;height:4px;background:#a0a0a0"></div>
<div class="r" style="left:1342px;top:624px;width:1px;height:4px;background:#a0a0a0"></div>
<div class="r" style="left:1127px;top:632px;width:220px;height:15px;background:#e6e8e9;border:1px solid #d0d0d0;box-sizing:border-box"></div>
<svg class="r" style="left:1197px;top:631px" width="10" height="15" viewBox="0 0 10 15"><path d="M0 4 L5 0 L10 4 V15 H0Z" fill="#0078d7"/></svg>
<div class="r" style="left:282px;top:120px;width:1px;height:8px;background:#1a1a4a"></div>
<div class="r" style="left:283px;top:95px;width:709px;height:518px;background:#f0f0f0;border:1px solid #a9a9a9;box-sizing:border-box;box-shadow:2px 5px 12px rgba(0,0,0,0.28)"></div>
<div class="r" style="left:284px;top:96px;width:707px;height:27px;background:#fff"></div>
<svg class="r" style="left:287.5px;top:99.5px" width="15" height="17" viewBox="0 0 14 16"><defs><linearGradient id="dmg" x1="0" y1="0" x2="0" y2="1"><stop offset="0" stop-color="#f08a2a"/><stop offset="1" stop-color="#d86010"/></linearGradient></defs>
<path d="M7 0.6 L13.4 8 L7 15.4 L0.6 8Z" fill="url(#dmg)"/>
<path d="M7 14.2 L1.2 8.6 L0.6 8 L7 15.4 L13.4 8 L12.8 8.6Z" fill="#7a3a6a" opacity="0.6"/>
<circle cx="7" cy="5.3" r="1.9" fill="#fff"/><circle cx="7" cy="10.7" r="1.9" fill="#fff"/><circle cx="4.3" cy="8" r="1.9" fill="#fff"/><circle cx="9.7" cy="8" r="1.9" fill="#fff"/>
<circle cx="7" cy="8" r="0.9" fill="#f8d0b0"/></svg>
<div class="t" style="left:308.50px;top:102.34px;font-size:12px;line-height:12px;color:#9a9a9a;transform:scaleX(0.9761);transform-origin:left 0;">Controle Estoque</div>
<div class="r" style="left:872px;top:108px;width:10px;height:1px;background:#999"></div>
<div class="r" style="left:917px;top:103px;width:10px;height:10px;border:1px solid #999;box-sizing:border-box"></div>
<svg class="r" style="left:963px;top:103px" width="11" height="11" viewBox="0 0 11 11"><path d="M0.5 0.5 L10.5 10.5 M10.5 0.5 L0.5 10.5" stroke="#999" stroke-width="1"/></svg>
<div class="r" style="left:284px;top:123px;width:707px;height:23px;background:#f0f0f0"></div>
<svg class="r" style="left:288px;top:126px" width="4" height="19" viewBox="0 0 4 19"><rect x="1" y="1.0" width="1.5" height="1.5" fill="#a0a0a0"/><rect x="1" y="4.5" width="1.5" height="1.5" fill="#a0a0a0"/><rect x="1" y="8.0" width="1.5" height="1.5" fill="#a0a0a0"/><rect x="1" y="11.5" width="1.5" height="1.5" fill="#a0a0a0"/><rect x="1" y="15.0" width="1.5" height="1.5" fill="#a0a0a0"/></svg>
<div class="t" style="left:301.00px;top:130.72px;font-size:12.5px;line-height:12.5px;color:#000;transform:scaleX(0.9750);transform-origin:left 0;">Opções</div>
<svg class="r" style="left:357px;top:135px" width="7" height="4" viewBox="0 0 7 4"><path d="M0 0 H7 L3.5 3.8Z" fill="#000"/></svg>
<div class="r" style="left:949px;top:122px;width:1px;height:24px;background:#c8c8c8"></div>
<div class="t" style="left:921.40px;top:129.84px;font-size:10px;line-height:10px;color:#16168c;transform:scaleX(0.8730);transform-origin:left 0;">NT184</div>
<svg class="r" style="left:954px;top:125px" width="32" height="19" viewBox="0 0 32 19"><defs><linearGradient id="chg954" x1="0" y1="0" x2="0" y2="1"><stop offset="0" stop-color="#64b0fa"/><stop offset="0.45" stop-color="#2a84ee"/><stop offset="1" stop-color="#4a9cf6"/></linearGradient></defs>
<rect x="0.8" y="0.8" width="30.4" height="17.4" rx="4.5" fill="url(#chg954)" stroke="#0a5ad0" stroke-width="1.4"/>
<circle cx="11.0" cy="7.0" r="2.5" fill="#f6f2f0"/>
<path d="M7.0 15.2 V12.5 Q7.0 10.1 9.6 10.1 H12.5 Q15.0 10.1 15.0 12.5 V15.2Z" fill="#f6f2f0"/>
<ellipse cx="21.4" cy="7.0" rx="4.5" ry="3.2" fill="#f2f0f0"/>
<path d="M18.6 8.6 L16.0 11.4 L20.2 9.7Z" fill="#f2f0f0"/></svg>
<div class="r" style="left:284px;top:146px;width:707px;height:1px;background:#a0a0a0"></div>
<div class="r" style="left:285px;top:169px;width:6px;height:1px;background:#d0d0d0"></div>
<div class="r" style="left:581px;top:169px;width:405px;height:1px;background:#d0d0d0"></div>
<div class="t" style="left:295.00px;top:163.52px;font-size:12.5px;line-height:12.5px;color:#000;transform:scaleX(0.9855);transform-origin:left 0;">Estoque</div>
<div class="r" style="left:347px;top:159px;width:226px;height:23px;background:#e1e1e1;border:1px solid #adadad;box-sizing:border-box"></div>
<svg class="r" style="left:559px;top:167px" width="10" height="6" viewBox="0 0 10 6"><path d="M0.5 0.8 L5 5 L9.5 0.8" fill="none" stroke="#444" stroke-width="1.1"/></svg>
<svg class="r" style="left:291px;top:201px" width="13" height="13" viewBox="0 0 13 13"><circle cx="6.5" cy="6.5" r="5.8" fill="#fff" stroke="#333" stroke-width="1.1"/><circle cx="6.5" cy="6.5" r="3.4" fill="#333"/></svg>
<div class="t" style="left:307.40px;top:201.92px;font-size:12.5px;line-height:12.5px;color:#000;transform:scaleX(0.9897);transform-origin:left 0;">Descrição</div>
<svg class="r" style="left:374px;top:201px" width="13" height="13" viewBox="0 0 13 13"><circle cx="6.5" cy="6.5" r="5.8" fill="#fff" stroke="#333" stroke-width="1.1"/></svg>
<div class="t" style="left:390.00px;top:201.92px;font-size:12.5px;line-height:12.5px;color:#000;">Código</div>
<div class="r" style="left:437px;top:193px;width:120px;height:23px;background:#fff;border:1px solid #7a7a7a;box-sizing:border-box"></div>
<div class="r" style="left:780px;top:185px;width:98px;height:23px;border:1.5px solid #063676;border-radius:4px;background:linear-gradient(#ffffff,#f6f4f2 50%,#ebe7e3);box-sizing:border-box"></div>
<div class="t" style="right:490.50px;top:191.34px;font-size:12px;line-height:12px;color:#000;font-weight:bold;">Item</div>
<div class="r" style="left:884px;top:185px;width:99px;height:23px;border:1.5px solid #063676;border-radius:4px;background:linear-gradient(#ffffff,#f6f4f2 50%,#ebe7e3);box-sizing:border-box"></div>
<svg class="r" style="left:887px;top:187px" width="20" height="20" viewBox="0 0 20 20"><defs><linearGradient id="trg" x1="0" y1="0" x2="1" y2="0"><stop offset="0" stop-color="#8ab8f0"/><stop offset="0.5" stop-color="#3a78c0"/><stop offset="1" stop-color="#1a4a8a"/></linearGradient></defs><path d="M4 7 H14 L13 17 H5Z" fill="url(#trg)" stroke="#000" stroke-width="0.9"/><path d="M6.5 17 H11.5 V19.5 H6.5Z" fill="#000"/><ellipse cx="9" cy="5" rx="6" ry="3" fill="#3a78c0" stroke="#000" stroke-width="0.9"/><path d="M2 8 L5 7 L4 9Z" fill="#f0a0a0" stroke="#000" stroke-width="0.5"/><path d="M16 8 L13 7 L14 9Z" fill="#f0f080" stroke="#000" stroke-width="0.5"/><path d="M13 12 L17 10.5 L18.5 12.5 L16 15 L13 15Z" fill="#707070" stroke="#000" stroke-width="0.8"/></svg>
<div class="t" style="left:907.00px;top:191.34px;font-size:12px;line-height:12px;color:#000;font-weight:bold;transform:scaleX(1.0382);transform-origin:left 0;">Apagar Item</div>
<div class="r" style="left:289px;top:222px;width:697px;height:155px;background:#fff;border:1px solid #a0a0a0;box-sizing:border-box"></div>
<div class="r" style="left:291px;top:224px;width:673px;height:17px;background:#b0c4dc"></div>
<div class="r" style="left:291px;top:241px;width:673px;height:1px;background:#000"></div>
<div class="r" style="left:291px;top:242px;width:673px;height:19px;background:#eef2fa"></div>
<div class="r" style="left:291px;top:261px;width:673px;height:18px;background:#4c8a9a"></div>
<div class="t" style="left:312.00px;top:227.14px;font-size:12px;line-height:12px;color:#000;font-weight:bold;transform:scaleX(0.9076);transform-origin:left 0;">Código</div>
<div class="t" style="right:476.00px;top:227.14px;font-size:12px;line-height:12px;color:#000;font-weight:bold;">Mínimo</div>
<div class="t" style="left:917.00px;top:227.14px;font-size:12px;line-height:12px;color:#000;font-weight:bold;">Atual</div>
<div class="t" style="left:295.80px;top:245.79px;font-size:11px;line-height:11px;color:#000;transform:scaleX(0.9511);transform-origin:left 0;">10000121001</div>
<div class="t" style="left:375.30px;top:245.79px;font-size:11px;line-height:11px;color:#000;">Luvas</div>
<div class="t" style="right:467.30px;top:245.79px;font-size:11px;line-height:11px;color:#000;">10</div>
<div class="t" style="right:403.40px;top:245.79px;font-size:11px;line-height:11px;color:#000;">0</div>
<div class="t" style="left:295.80px;top:264.69px;font-size:11px;line-height:11px;color:#fff;transform:scaleX(0.9511);transform-origin:left 0;">10000121000</div>
<div class="t" style="left:375.30px;top:264.69px;font-size:11px;line-height:11px;color:#fff;transform:scaleX(0.9581);transform-origin:left 0;">Seringa 3 ml com</div>
<div class="r" style="left:964px;top:224px;width:20px;height:151px;background:#f0f0f0"></div>
<svg class="r" style="left:969px;top:229px" width="10" height="7" viewBox="0 0 10 7"><path d="M0.8 6 L5 1.5 L9.2 6" fill="none" stroke="#505050" stroke-width="1.6"/></svg>
<div class="r" style="left:968px;top:280px;width:15px;height:78px;background:#cdcdcd"></div>
<svg class="r" style="left:969px;top:363px" width="10" height="7" viewBox="0 0 10 7"><path d="M0.8 1 L5 5.5 L9.2 1" fill="none" stroke="#505050" stroke-width="1.6"/></svg>
<div class="t" style="left:298.00px;top:403.92px;font-size:12.5px;line-height:12.5px;color:#16168c;transform:scaleX(0.9678);transform-origin:left 0;">Movimentação para:</div>
<div class="t" style="left:414.60px;top:403.92px;font-size:12.5px;line-height:12.5px;color:#8b0000;font-weight:bold;">Seringa 10 ml Com Agulha 25x7</div>
<div class="r" style="left:800px;top:398px;width:91px;height:24px;border:1.5px solid #063676;border-radius:4px;background:linear-gradient(#ffffff,#f6f4f2 50%,#ebe7e3);box-sizing:border-box"></div>
<div class="t" style="right:487.00px;top:404.14px;font-size:12px;line-height:12px;color:#000;font-weight:bold;">Entrada</div>
<div class="r" style="left:897px;top:398px;width:86px;height:24px;border:1.5px solid #063676;border-radius:4px;background:linear-gradient(#ffffff,#f6f4f2 50%,#ebe7e3);box-sizing:border-box"></div>
<svg class="r" style="left:916px;top:407px" width="14" height="6" viewBox="0 0 14 6"><rect x="0.5" y="0.5" width="13" height="5" rx="2.5" fill="#e02010" stroke="#901000" stroke-width="0.8"/></svg>
<div class="t" style="left:934.40px;top:404.14px;font-size:12px;line-height:12px;color:#000;font-weight:bold;transform:scaleX(0.9371);transform-origin:left 0;">Saida</div>
<div class="r" style="left:286px;top:428px;width:703px;height:174px;background:#fff;border:1px solid #a0a0a0;box-sizing:border-box"></div>
<div class="r" style="left:288px;top:430px;width:679px;height:17px;background:#b0c4dc"></div>
<div class="r" style="left:288px;top:447px;width:679px;height:1px;background:#000"></div>
<div class="r" style="left:288px;top:448px;width:679px;height:18px;background:#4c8a9a"></div>
<div class="t" style="left:315.00px;top:432.94px;font-size:12px;line-height:12px;color:#000;font-weight:bold;transform:scaleX(1.0189);transform-origin:left 0;">Data</div>
<div class="t" style="left:395.00px;top:432.94px;font-size:12px;line-height:12px;color:#000;font-weight:bold;">Fornecedor</div>
<div class="t" style="right:477.00px;top:432.94px;font-size:12px;line-height:12px;color:#000;font-weight:bold;">Fabricação</div>
<div class="t" style="left:906.00px;top:432.94px;font-size:12px;line-height:12px;color:#000;font-weight:bold;transform:scaleX(0.9859);transform-origin:left 0;">Validade</div>
<div class="r" style="left:463px;top:184px;width:391px;height:364px;background:#f0f0f0;border:1px solid #5a9a2a;box-sizing:border-box;box-shadow:1px 5px 16px rgba(0,0,0,0.32)"></div>
<div class="r" style="left:464px;top:185px;width:389px;height:27px;background:#fff"></div>
<svg class="r" style="left:467.5px;top:188.5px" width="15" height="17" viewBox="0 0 14 16"><defs><linearGradient id="dmg" x1="0" y1="0" x2="0" y2="1"><stop offset="0" stop-color="#f08a2a"/><stop offset="1" stop-color="#d86010"/></linearGradient></defs>
<path d="M7 0.6 L13.4 8 L7 15.4 L0.6 8Z" fill="url(#dmg)"/>
<path d="M7 14.2 L1.2 8.6 L0.6 8 L7 15.4 L13.4 8 L12.8 8.6Z" fill="#7a3a6a" opacity="0.6"/>
<circle cx="7" cy="5.3" r="1.9" fill="#fff"/><circle cx="7" cy="10.7" r="1.9" fill="#fff"/><circle cx="4.3" cy="8" r="1.9" fill="#fff"/><circle cx="9.7" cy="8" r="1.9" fill="#fff"/>
<circle cx="7" cy="8" r="0.9" fill="#f8d0b0"/></svg>
<div class="t" style="left:488.80px;top:190.84px;font-size:12px;line-height:12px;color:#000;transform:scaleX(0.9687);transform-origin:left 0;">Cadastro Item</div>
<div class="r" style="left:734px;top:197px;width:10px;height:1px;background:#000"></div>
<div class="r" style="left:779px;top:192px;width:10px;height:10px;border:1px solid #000;box-sizing:border-box"></div>
<svg class="r" style="left:825px;top:192px" width="11" height="11" viewBox="0 0 11 11"><path d="M0.5 0.5 L10.5 10.5 M10.5 0.5 L0.5 10.5" stroke="#000" stroke-width="1"/></svg>
<div class="r" style="left:464px;top:212px;width:389px;height:21px;background:#f0f0f0"></div>
<svg class="r" style="left:468px;top:213px" width="4" height="20" viewBox="0 0 4 20"><rect x="1" y="1.0" width="1.5" height="1.5" fill="#a0a0a0"/><rect x="1" y="4.5" width="1.5" height="1.5" fill="#a0a0a0"/><rect x="1" y="8.0" width="1.5" height="1.5" fill="#a0a0a0"/><rect x="1" y="11.5" width="1.5" height="1.5" fill="#a0a0a0"/><rect x="1" y="15.0" width="1.5" height="1.5" fill="#a0a0a0"/></svg>
<div class="t" style="left:481.40px;top:219.52px;font-size:12.5px;line-height:12.5px;color:#000;transform:scaleX(0.9750);transform-origin:left 0;">Opções</div>
<svg class="r" style="left:537px;top:224px" width="7" height="4" viewBox="0 0 7 4"><path d="M0 0 H7 L3.5 3.8Z" fill="#000"/></svg>
<div class="r" style="left:812px;top:211px;width:1px;height:22px;background:#c8c8c8"></div>
<div class="t" style="left:783.00px;top:218.63px;font-size:10px;line-height:10px;color:#16168c;transform:scaleX(0.8996);transform-origin:left 0;">NT199</div>
<svg class="r" style="left:816px;top:214px" width="32" height="19" viewBox="0 0 32 19"><defs><linearGradient id="chg816" x1="0" y1="0" x2="0" y2="1"><stop offset="0" stop-color="#64b0fa"/><stop offset="0.45" stop-color="#2a84ee"/><stop offset="1" stop-color="#4a9cf6"/></linearGradient></defs>
<rect x="0.8" y="0.8" width="30.4" height="17.4" rx="4.5" fill="url(#chg816)" stroke="#0a5ad0" stroke-width="1.4"/>
<circle cx="11.0" cy="7.0" r="2.5" fill="#f6f2f0"/>
<path d="M7.0 15.2 V12.5 Q7.0 10.1 9.6 10.1 H12.5 Q15.0 10.1 15.0 12.5 V15.2Z" fill="#f6f2f0"/>
<ellipse cx="21.4" cy="7.0" rx="4.5" ry="3.2" fill="#f2f0f0"/>
<path d="M18.6 8.6 L16.0 11.4 L20.2 9.7Z" fill="#f2f0f0"/></svg>
<div class="t" style="left:476.50px;top:240.22px;font-size:12.5px;line-height:12.5px;color:#16168c;">Descrição</div>
<div class="r" style="left:476px;top:256px;width:366px;height:23px;background:#fff;border:1px solid #7a7a7a;box-sizing:border-box"></div>
<div class="t" style="left:479.30px;top:260.82px;font-size:12.5px;line-height:12.5px;color:#16168c;transform:scaleX(0.9734);transform-origin:left 0;">Seringa 10 ml Com Agulha 25x7</div>
<div class="t" style="left:476.30px;top:290.22px;font-size:12.5px;line-height:12.5px;color:#16168c;transform:scaleX(0.9846);transform-origin:left 0;">Código</div>
<div class="r" style="left:476px;top:306px;width:366px;height:23px;background:#fff;border:1px solid #7a7a7a;box-sizing:border-box"></div>
<div class="t" style="left:479.30px;top:310.92px;font-size:12.5px;line-height:12.5px;color:#16168c;transform:scaleX(0.9809);transform-origin:left 0;">20000212000</div>
<div class="t" style="left:476.30px;top:336.92px;font-size:12.5px;line-height:12.5px;color:#16168c;">Unidade de compra</div>
<div class="r" style="left:476px;top:356px;width:180px;height:23px;background:#e1e1e1;border:1px solid #adadad;box-sizing:border-box"></div>
<div class="t" style="left:480.50px;top:361.22px;font-size:12.5px;line-height:12.5px;color:#000;transform:scaleX(0.9455);transform-origin:left 0;">caixas</div>
<svg class="r" style="left:642px;top:365px" width="10" height="6" viewBox="0 0 10 6"><path d="M0.5 0.8 L5 5 L9.5 0.8" fill="none" stroke="#444" stroke-width="1.1"/></svg>
<div class="t" style="left:662.20px;top:336.32px;font-size:12.5px;line-height:12.5px;color:#16168c;">Unidade de consumo</div>
<div class="r" style="left:662px;top:356px;width:180px;height:23px;background:#e1e1e1;border:1px solid #adadad;box-sizing:border-box"></div>
<div class="t" style="left:666.40px;top:361.82px;font-size:12.5px;line-height:12.5px;color:#000;transform:scaleX(0.9855);transform-origin:left 0;">unidades</div>
<svg class="r" style="left:827px;top:365px" width="10" height="6" viewBox="0 0 10 6"><path d="M0.5 0.8 L5 5 L9.5 0.8" fill="none" stroke="#444" stroke-width="1.1"/></svg>
<div class="t" style="left:476.30px;top:389.42px;font-size:12.5px;line-height:12.5px;color:#16168c;transform:scaleX(0.9775);transform-origin:left 0;">Qtd unidades / caixas</div>
<div class="r" style="left:476px;top:406px;width:138px;height:23px;background:#fff;border:1px solid #7a7a7a;box-sizing:border-box"></div>
<div class="t" style="left:479.30px;top:410.52px;font-size:12.5px;line-height:12.5px;color:#16168c;transform:scaleX(0.9591);transform-origin:left 0;">100</div>
<div class="t" style="left:662.20px;top:389.42px;font-size:12.5px;line-height:12.5px;color:#16168c;">Quantidade mínima</div>
<div class="r" style="left:662px;top:406px;width:97px;height:23px;background:#ffffe1;border:1px solid #0078d7;box-sizing:border-box"></div>
<div class="t" style="left:665.20px;top:410.52px;font-size:12.5px;line-height:12.5px;color:#16168c;transform:scaleX(0.9711);transform-origin:left 0;">20</div>
<div class="t" style="left:476.30px;top:446.72px;font-size:12.5px;line-height:12.5px;color:#16168c;">Validade média em dias</div>
<div class="r" style="left:476px;top:466px;width:138px;height:23px;background:#fff;border:1px solid #7a7a7a;box-sizing:border-box"></div><div class="r" style="left:593px;top:468px;width:19px;height:19px;background:#d4d4d4;border:1px solid #b0b0b0;box-sizing:border-box"></div><svg class="r" style="left:593px;top:468px" width="19" height="19" viewBox="0 0 19 19"><path d="M1.5 17.5 L17.5 1.5" stroke="#888" stroke-width="1"/><path d="M5 10 V3 M2.5 5.5 L5 3 L7.5 5.5" fill="none" stroke="#000" stroke-width="1.6"/><path d="M13 9 V16 M10.5 13.5 L13 16 L15.5 13.5" fill="none" stroke="#000" stroke-width="1.6"/></svg>
<div class="t" style="left:479.40px;top:470.72px;font-size:12.5px;line-height:12.5px;color:#16168c;transform:scaleX(0.9711);transform-origin:left 0;">30</div>
<div class="t" style="left:662.50px;top:446.72px;font-size:12.5px;line-height:12.5px;color:#16168c;transform:scaleX(0.9830);transform-origin:left 0;">Dias para aviso de vencimento</div>
<div class="r" style="left:662px;top:466px;width:138px;height:23px;background:#fff;border:1px solid #7a7a7a;box-sizing:border-box"></div><div class="r" style="left:779px;top:468px;width:19px;height:19px;background:#d4d4d4;border:1px solid #b0b0b0;box-sizing:border-box"></div><svg class="r" style="left:779px;top:468px" width="19" height="19" viewBox="0 0 19 19"><path d="M1.5 17.5 L17.5 1.5" stroke="#888" stroke-width="1"/><path d="M5 10 V3 M2.5 5.5 L5 3 L7.5 5.5" fill="none" stroke="#000" stroke-width="1.6"/><path d="M13 9 V16 M10.5 13.5 L13 16 L15.5 13.5" fill="none" stroke="#000" stroke-width="1.6"/></svg>
<div class="t" style="left:665.70px;top:470.52px;font-size:12.5px;line-height:12.5px;color:#16168c;">5</div>
<div class="t" style="left:662.50px;top:492.42px;font-size:12.5px;line-height:12.5px;color:#16168c;transform:scaleX(0.9568);transform-origin:left 0;">0 = Aviso Desativado</div>
<div class="r" style="left:464px;top:512px;width:389px;height:1px;background:#fafafa"></div>
<div class="r" style="left:610px;top:518px;width:113px;height:24px;border:1.5px solid #063676;border-radius:4px;background:linear-gradient(#ffffff,#f6f4f2 50%,#ebe7e3);box-sizing:border-box"></div>
<svg class="r" style="left:650px;top:523px" width="15" height="13" viewBox="0 0 15 13"><path d="M1.5 6.5 L5.5 10.5 L13.5 2" fill="none" stroke="#0a6a0a" stroke-width="3.6"/><path d="M1.5 6.5 L5.5 10.5 L13.5 2" fill="none" stroke="#30e030" stroke-width="1.8"/></svg>
<div class="t" style="left:667.60px;top:524.04px;font-size:12px;line-height:12px;color:#000;font-weight:bold;transform:scaleX(0.8500);transform-origin:left 0;"><u>O</u>K</div>
<div class="r" style="left:729px;top:518px;width:113px;height:24px;border:1.5px solid #063676;border-radius:4px;background:linear-gradient(#ffffff,#f6f4f2 50%,#ebe7e3);box-sizing:border-box"></div>
<svg class="r" style="left:752px;top:523px" width="15" height="14" viewBox="0 0 15 14"><path d="M2 2 L13 12 M13 2 L2 12" stroke="#800" stroke-width="4.2" stroke-linecap="round"/><path d="M2 2 L13 12 M13 2 L2 12" stroke="#f02020" stroke-width="2.4" stroke-linecap="round"/></svg>
<div class="t" style="left:770.00px;top:524.04px;font-size:12px;line-height:12px;color:#000;font-weight:bold;transform:scaleX(0.9666);transform-origin:left 0;"><u>C</u>ancelar</div>
<div class="r" style="left:459px;top:233px;width:400px;height:323px;border:5px solid #ec1c24;box-sizing:border-box"></div>
<div class="r" style="left:0px;top:666px;width:1365px;height:38px;background:#f0f0f0"></div>
<div class="r" style="left:0px;top:666px;width:1365px;height:3px;background:#fbfbfb"></div>
<div class="r" style="left:0px;top:669px;width:168px;height:17px;background:#cce4f7;border:1px solid #0078d7;border-bottom:none;box-sizing:border-box"></div>
<div class="r" style="left:170px;top:669px;width:168px;height:17px;background:#e1e1e1;border:1px solid #adadad;border-bottom:none;box-sizing:border-box"></div>
<div class="r" style="left:340px;top:669px;width:168px;height:17px;background:#e1e1e1;border:1px solid #adadad;border-bottom:none;box-sizing:border-box"></div>
<div class="t" style="left:43.18px;top:673.00px;font-size:13px;line-height:13px;color:#000;transform:scaleX(0.9861);transform-origin:center 0;">Cadastro Item</div>
<div class="t" style="left:203.78px;top:673.00px;font-size:13px;line-height:13px;color:#000;">Controle Estoque</div>
<div class="t" style="left:401.59px;top:673.00px;font-size:13px;line-height:13px;color:#000;transform:scaleX(0.9818);transform-origin:center 0;">Agenda</div>
<div class="r" style="left:0px;top:686px;width:1365px;height:1px;background:#e4e4e4"></div>
</body></html>
